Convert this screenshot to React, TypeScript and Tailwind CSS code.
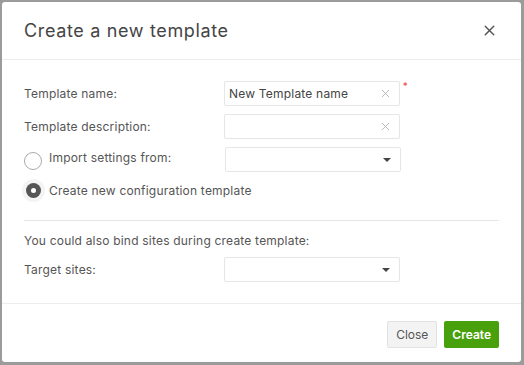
import React from 'react';
import { X } from 'lucide-react';

const font = { fontFamily: 'Inter, "Noto Sans", sans-serif' };

const ClearInput = ({ value }: { value?: string }) => (
  <div className="w-[176px] h-[25px] border border-[#e6e6e6] rounded-[2px] bg-white flex items-center pl-[4px] pr-[7px]">
    <span className="flex-1 text-[12px] text-[#444] tracking-[0.2px]">{value}</span>
    <X size={13} strokeWidth={1.5} className="text-[#aaa]" />
  </div>
);

const SelectBox = () => (
  <div className="w-[176px] h-[25px] border border-[#e6e6e6] rounded-[2px] bg-white flex items-center justify-end pr-[9px]">
    <div className="w-0 h-0 border-l-[4px] border-r-[4px] border-t-[4px] border-l-transparent border-r-transparent border-t-[#444]" />
  </div>
);

export default function App() {
  return (
    <div className="w-[524px] h-[365px] bg-[#9b9b9b] pt-[2px] pl-[2px] pr-[3px] pb-[3px]" style={font}>
      <div className="w-full h-full bg-white rounded-[3px] flex flex-col">
        {/* Header */}
        <div className="h-[58px] border-b border-[#ececec] flex items-center justify-between pl-[22px] pr-[23px]">
          <h1 className="text-[18px] text-[#444] tracking-[0.65px]">Create a new template</h1>
          <X size={17} strokeWidth={2} className="text-[#555]" />
        </div>

        {/* Body */}
        <div className="flex-1 px-[22px] pt-[21px] text-[12px] text-[#555] tracking-[0.2px]">
          <div className="flex items-center h-[25px]">
            <span className="w-[200px]">Template name:</span>
            <div className="relative">
              <ClearInput value="New Template name" />
              <span className="absolute -right-[8px] -top-[2px] text-[10px] text-[#e44]">*</span>
            </div>
          </div>
          <div className="flex items-center h-[25px] mt-[8px]">
            <span className="w-[200px]">Template description:</span>
            <ClearInput />
          </div>
          <div className="flex items-center h-[25px] mt-[8px]">
            <div className="w-[200px] flex items-center">
              <div className="w-[18px] h-[18px] rounded-full border-[1.5px] border-[#aaa] mr-[7px] mt-[2px]" />
              <span className="-mt-[3px]">Import settings from:</span>
            </div>
            <div className="ml-[1px]"><SelectBox /></div>
          </div>
          <div className="flex items-center h-[25px] mt-[6px]">
            <div className="w-[18px] flex items-center justify-center mr-[7px]">
              <div className="w-[15px] h-[15px] rounded-full bg-[#555] flex items-center justify-center shadow-[0_0_0_4px_#f4f4f4]">
                <div className="w-[5px] h-[5px] rounded-full bg-white" />
              </div>
            </div>
            <span>Create new configuration template</span>
          </div>

          <div className="border-t border-[#e6e6e6] mt-[17px]" />

          <div className="mt-[11px]">You could also bind sites during create template:</div>
          <div className="flex items-center h-[27px] mt-[6px]">
            <span className="w-[200px]">Target sites:</span>
            <SelectBox />
          </div>
        </div>

        {/* Footer */}
        <div className="h-[59px] border-t border-[#ececec] flex items-start justify-end gap-[7px] pr-[22px] pt-[17px]">
          <button className="h-[27px] px-[8px] bg-[#f3f3f3] border border-[#e2e2e2] rounded-[2px] text-[12px] text-[#555]">Close</button>
          <button className="h-[27px] px-[8px] bg-[#48a10c] rounded-[2px] text-[12px] font-semibold text-white">Create</button>
        </div>
      </div>
    </div>
  );
}
